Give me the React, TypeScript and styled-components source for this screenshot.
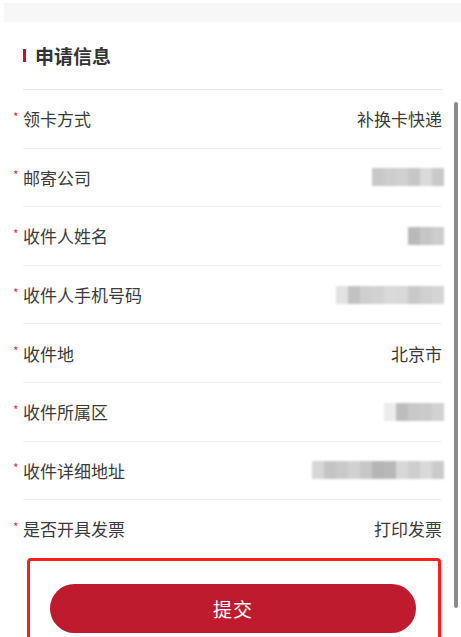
import styled, { createGlobalStyle } from 'styled-components';

const GlobalStyle = createGlobalStyle`
  html, body {
    margin: 0;
    padding: 0;
    background: #fff;
  }
  body {
    font-family: "Noto Sans CJK SC", "Noto Sans", sans-serif;
    color: #333;
  }
`;

type Field = {
  label: string;
  value?: string;
  mosaic?: string[];
};

const fields: Field[] = [
  { label: '领卡方式', value: '补换卡快递' },
  { label: '邮寄公司', mosaic: ['#c8c8c8', '#cdcdcd', '#d0d0d0', '#c6c6c6', '#dadada', '#c9c9c9'] },
  { label: '收件人姓名', mosaic: ['#b9b9b9', '#c6c6c6', '#cdcdcd'] },
  {
    label: '收件人手机号码',
    mosaic: ['#e2e2e2', '#c2c2c2', '#cfcfcf', '#d2d2d2', '#dadada', '#d8d8d8', '#c9c9c9', '#d0d0d0', '#d4d4d4'],
  },
  { label: '收件地', value: '北京市' },
  { label: '收件所属区', mosaic: ['#ececec', '#bdbdbd', '#c8c8c8', '#cbcbcb', '#d2d2d2'] },
  {
    label: '收件详细地址',
    mosaic: ['#d6d6d6', '#c4c4c4', '#c9c9c9', '#d1d1d1', '#c7c7c7', '#b5b5b5', '#b8b8b8', '#d7d7d7', '#cecece', '#d9d9d9', '#cbcbcb'],
  },
  { label: '是否开具发票', value: '打印发票' },
];

const App = () => {
  return (
    <>
      <GlobalStyle />
      <Page>
        <TopStrip />
        <Section>
          <Header>
            <Marker />
            <Title>申请信息</Title>
          </Header>
          {fields.map((f) => (
            <Row key={f.label}>
              <Label>
                <Star>*</Star>
                {f.label}
              </Label>
              {f.value ? (
                <Value>{f.value}</Value>
              ) : (
                <Mosaic>
                  {f.mosaic?.map((c, i) => (
                    <Cell key={i} $shade={c} />
                  ))}
                </Mosaic>
              )}
            </Row>
          ))}
        </Section>
        <Highlight>
          <SubmitButton type="button">提交</SubmitButton>
        </Highlight>
        <ScrollThumb />
      </Page>
    </>
  );
};

export default App;

const Page = styled.div`
  position: relative;
  width: 461px;
  height: 637px;
  overflow: hidden;
  background: #fff;
`;

const TopStrip = styled.div`
  margin: 3px 0 0 4px;
  height: 19px;
  background: #f7f7f7;
`;

const Section = styled.div`
  padding: 0 19px 0 23px;
`;

const Header = styled.div`
  display: flex;
  align-items: center;
  gap: 9px;
  height: 67px;
  border-bottom: 1px solid #e6e6e6;
`;

const Marker = styled.span`
  width: 3px;
  height: 13px;
  background: #c8102e;
`;

const Title = styled.h2`
  margin: 0;
  font-size: 19px;
  font-weight: 700;
  color: #333;
`;

const Row = styled.div`
  display: flex;
  align-items: center;
  justify-content: space-between;
  height: 57.6px;
  border-bottom: 1px solid #f1f1f1;

  &:last-child {
    border-bottom: none;
  }
`;

const Label = styled.div`
  display: flex;
  align-items: center;
  font-size: 17px;
  color: #3a3a3a;
`;

const Star = styled.span`
  width: 10px;
  margin-left: -10px;
  margin-top: -5px;
  font-size: 12px;
  color: #e4393c;
`;

const Value = styled.div`
  font-size: 17px;
  color: #3a3a3a;
`;

const Mosaic = styled.div`
  display: flex;
  margin-right: -2px;
  filter: blur(1px);
`;

const Cell = styled.span<{ $shade: string }>`
  width: 12px;
  height: 18px;
  background: ${(p) => p.$shade};
`;

const Highlight = styled.div`
  margin: 0 20px 0 27px;
  padding: 23px 22px 0 20px;
  height: 55px;
  border: 3px solid #ff1e1e;
  border-radius: 4px;
`;

const SubmitButton = styled.button`
  width: 100%;
  height: 49px;
  border: none;
  border-radius: 25px;
  background: #be1b2e;
  color: #fff;
  font-family: "Noto Sans CJK SC", sans-serif;
  font-size: 19px;
  letter-spacing: 1px;
  cursor: pointer;
`;

const ScrollThumb = styled.div`
  position: absolute;
  top: 102px;
  left: 454px;
  width: 4px;
  height: 506px;
  border-radius: 2px;
  background: #8a8a8a;
`;
